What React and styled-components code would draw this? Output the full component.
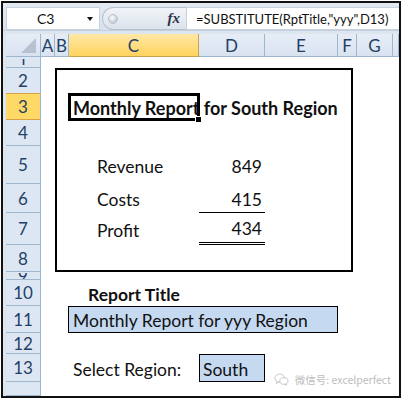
import styled, { createGlobalStyle } from 'styled-components';

const GlobalStyle = createGlobalStyle`
  html, body {
    margin: 0;
    padding: 0;
    background: #fff;
  }
  body {
    font-family: Lato, 'Open Sans', sans-serif;
  }
`;

const COLUMNS = ['A', 'B', 'C', 'D', 'E', 'F', 'G', ''];
const ROWS = [1, 2, 3, 4, 5, 6, 7, 8, 9, 10, 11, 12, 13, ''];

const App = () => {
  return (
    <>
      <GlobalStyle />
      <Frame>
        <FormulaBar>
          <NameBox>
            <span>C3</span>
            <DropArrow />
          </NameBox>
          <Grip>
            <GripDot />
            <Fx>fx</Fx>
          </Grip>
          <FormulaInput>=SUBSTITUTE(RptTitle,"yyy",D13)</FormulaInput>
        </FormulaBar>

        <Sheet>
          <Corner>
            <CornerTriangle />
          </Corner>
          {COLUMNS.map((col, i) => (
            <ColHeader key={`c${i}`} $col={i + 2} $selected={col === 'C'}>
              {col}
            </ColHeader>
          ))}
          {ROWS.map((row, i) => (
            <RowHeader
              key={`r${i}`}
              $row={i + 2}
              $selected={row === 3}
              $tiny={row === 1 || row === 9}
            >
              <span>{row}</span>
            </RowHeader>
          ))}
          <Canvas />

          <ReportBox />
          <Title>Monthly Report for South Region</Title>
          <Selection>
            <FillHandle />
          </Selection>

          <Label $row={6}>Revenue</Label>
          <Amount $row={6}>849</Amount>
          <Label $row={7}>Costs</Label>
          <Amount $row={7} $line="single">415</Amount>
          <Label $row={8}>Profit</Label>
          <Amount $row={8} $line="double">434</Amount>

          <Heading>Report Title</Heading>
          <InputCell>Monthly Report for yyy Region</InputCell>
          <Prompt>Select Region:</Prompt>
          <RegionCell>South</RegionCell>
        </Sheet>

        <Watermark>
          <svg width="15" height="13" viewBox="0 0 16 14" fill="none" stroke="#c4c4c4" strokeWidth="1">
            <ellipse cx="6" cy="5.5" rx="5.2" ry="4.4" />
            <path d="M3 9.2 L2.4 11.4 L5 9.8" />
            <ellipse cx="10.6" cy="8.6" rx="4.4" ry="3.6" fill="#fff" />
            <path d="M13 11.6 L13.6 13.2 L11.6 12.1" />
          </svg>
          <span>微信号: excelperfect</span>
        </Watermark>
      </Frame>
    </>
  );
};

export default App;

const Frame = styled.div`
  position: relative;
  margin: 1px 0 0 1px;
  width: 400px;
  height: 397px;
  border: 2px solid #111;
  box-sizing: border-box;
  background: #dde5ef;
  display: flex;
  flex-direction: column;
  overflow: hidden;
`;

const FormulaBar = styled.div`
  height: 28px;
  display: flex;
  align-items: flex-start;
  padding: 4px 0 0 3px;
  box-sizing: border-box;
  background: linear-gradient(#e3e9f0, #d9e2ed);
  border-bottom: 1px solid #c3cfdd;
`;

const NameBox = styled.div`
  position: relative;
  width: 94px;
  height: 23px;
  background: #fff;
  box-sizing: border-box;
  border: 1px solid #c7d2df;
  display: flex;
  align-items: center;
  padding-left: 30px;
  font-size: 14px;
  color: #111;
`;

const DropArrow = styled.div`
  position: absolute;
  right: 6px;
  top: 9px;
  width: 0;
  height: 0;
  border-left: 3.5px solid transparent;
  border-right: 3.5px solid transparent;
  border-top: 4px solid #111;
`;

const Grip = styled.div`
  margin-left: 2px;
  width: 84px;
  height: 23px;
  box-sizing: border-box;
  border: 1px solid #b7c3d1;
  border-right: none;
  border-radius: 12px 0 0 12px;
  background: linear-gradient(#f1f4f8, #dce3eb);
  display: flex;
  align-items: center;
  justify-content: space-between;
  padding: 0 6px 0 5px;
`;

const GripDot = styled.div`
  width: 8px;
  height: 8px;
  border-radius: 50%;
  background: radial-gradient(circle at 40% 35%, #ffffff, #aab5c3);
  border: 1px solid #b9c3cf;
`;

const Fx = styled.span`
  font-family: 'Liberation Serif', serif;
  font-style: italic;
  font-weight: bold;
  font-size: 15px;
  color: #2a3547;
`;

const FormulaInput = styled.div`
  flex: 1;
  height: 23px;
  background: #fff;
  box-sizing: border-box;
  border: 1px solid #c7d2df;
  border-right: none;
  display: flex;
  align-items: center;
  padding-left: 9px;
  font-size: 13px;
  color: #111;
  white-space: nowrap;
  overflow: hidden;
`;

const Sheet = styled.div`
  flex: 1;
  margin-top: 3px;
  padding-left: 3px;
  display: grid;
  grid-template-columns: 35px 14px 14px 130px 66px 73px 19px 36px 1fr;
  grid-template-rows: 23px 11px 26px 26px 26px 38px 29px 32px 27px 8px 26px 27px 21px 28px 1fr;
  font-size: 17.5px;
  color: #111;
`;

const headerBase = `
  box-sizing: border-box;
  display: flex;
  align-items: center;
  justify-content: center;
  overflow: hidden;
  font-size: 17px;
  color: #243f66;
  border-right: 1px solid #9eb6ce;
  border-bottom: 1px solid #9eb6ce;
`;

const Corner = styled.div`
  ${headerBase}
  grid-column: 1;
  grid-row: 1;
  position: relative;
  background: linear-gradient(#e6edf7, #d9e3f0);
`;

const CornerTriangle = styled.div`
  position: absolute;
  right: 4px;
  bottom: 3px;
  width: 0;
  height: 0;
  border-left: 15px solid transparent;
  border-bottom: 15px solid #b6c2d1;
`;

const ColHeader = styled.div`
  ${headerBase}
  grid-column: ${(p) => p.$col};
  grid-row: 1;
  background: ${(p) =>
    p.$selected
      ? 'linear-gradient(#ffe8a6, #ffd35e)'
      : 'linear-gradient(#e6edf7, #d9e3f0)'};
  border-right-color: ${(p) => (p.$selected ? '#c9a24f' : '#9eb6ce')};
  border-bottom-color: ${(p) => (p.$selected ? '#c9a24f' : '#9eb6ce')};
`;

const RowHeader = styled.div`
  ${headerBase}
  grid-column: 1;
  grid-row: ${(p) => p.$row};
  background: ${(p) => (p.$selected ? '#ffd966' : '#dde7f4')};
  border-bottom-color: ${(p) => (p.$selected ? '#d9a24a' : '#9eb6ce')};
  border-top: ${(p) => (p.$selected ? '1px solid #d9a24a' : 'none')};
  margin-top: ${(p) => (p.$selected ? '-1px' : '0')};

  span {
    line-height: ${(p) => (p.$tiny ? '6px' : 'normal')};
    overflow: ${(p) => (p.$tiny ? 'hidden' : 'visible')};
  }
`;

const Canvas = styled.div`
  grid-column: 2 / -1;
  grid-row: 2 / -1;
  background: #fff;
`;

const ReportBox = styled.div`
  grid-column: 3 / 8;
  grid-row: 3 / 10;
  margin-right: 4px;
  border: 2px solid #000;
  box-sizing: border-box;
  background: #fff;
`;

const cellText = `
  display: flex;
  align-items: center;
  white-space: nowrap;
  z-index: 1;
  padding-top: 2px;
  box-sizing: border-box;
`;

const Title = styled.div`
  ${cellText}
  grid-column: 4 / 8;
  grid-row: 4;
  padding-left: 4px;
  font-weight: bold;
  font-size: 18px;
`;

const Selection = styled.div`
  grid-column: 4;
  grid-row: 4;
  position: relative;
  margin: -1px;
  border: 3px solid #000;
  z-index: 2;
`;

const FillHandle = styled.div`
  position: absolute;
  right: -5px;
  bottom: -5px;
  width: 5px;
  height: 5px;
  background: #000;
  border: 1px solid #fff;
`;

const Label = styled.div`
  ${cellText}
  grid-column: 4;
  grid-row: ${(p) => p.$row};
  padding-left: 28px;
`;

const Amount = styled.div`
  ${cellText}
  grid-column: 5;
  grid-row: ${(p) => p.$row};
  justify-content: flex-end;
  padding-right: 3px;
  border-bottom: ${(p) =>
    p.$line === 'single'
      ? '1px solid #000'
      : p.$line === 'double'
      ? '3px double #000'
      : 'none'};
`;

const Heading = styled.div`
  ${cellText}
  grid-column: 4;
  grid-row: 11;
  justify-content: center;
  font-weight: bold;
`;

const InputCell = styled.div`
  ${cellText}
  grid-column: 4 / 7;
  grid-row: 12;
  margin-left: -1px;
  padding-left: 4px;
  background: #c5d9f1;
  border: 1px solid #000;
`;

const Prompt = styled.div`
  ${cellText}
  grid-column: 4;
  grid-row: 14;
  padding-left: 4px;
`;

const RegionCell = styled.div`
  ${cellText}
  grid-column: 5;
  grid-row: 14;
  padding-left: 3px;
  background: #c5d9f1;
  border: 1px solid #000;
`;

const Watermark = styled.div`
  position: absolute;
  right: 8px;
  bottom: 9px;
  display: flex;
  align-items: center;
  gap: 6px;
  font-family: 'Noto Sans CJK SC', 'Noto Sans', sans-serif;
  font-size: 10.5px;
  color: #bdbdbd;
  z-index: 3;
`;
